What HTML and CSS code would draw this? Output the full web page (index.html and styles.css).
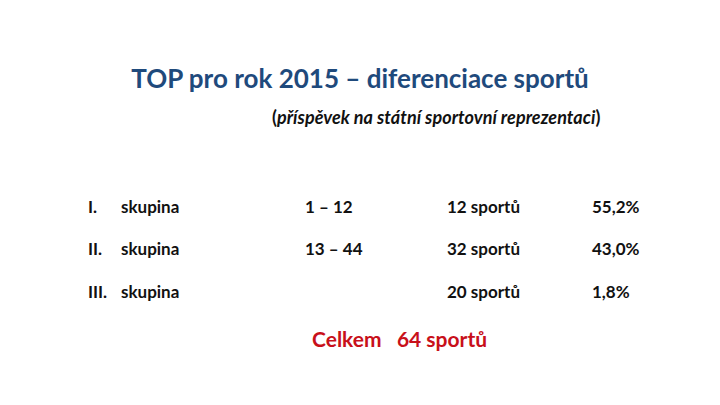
FILE: index.html
```html
<!DOCTYPE html>
<html lang="cs">
<head>
    <meta charset="UTF-8">
    <title>TOP pro rok 2015</title>
    <link rel="stylesheet" href="styles.css">
</head>
<body>
    <div class="slide">
        <h1 class="title">TOP pro rok 2015 – diferenciace sportů</h1>
        <p class="subtitle">(<em>příspěvek na státní sportovní reprezentaci</em>)</p>

        <div class="groups">
            <span>I.</span><span>skupina</span><span>1 – 12</span><span>12 sportů</span><span>55,2%</span>
            <span>II.</span><span>skupina</span><span>13 – 44</span><span>32 sportů</span><span>43,0%</span>
            <span>III.</span><span>skupina</span><span></span><span>20 sportů</span><span>1,8%</span>
        </div>

        <p class="total">Celkem&nbsp;&nbsp; 64 sportů</p>
    </div>
</body>
</html>
```

FILE: styles.css
```css
body {
    margin: 0;
    background-color: #fff;
    font-family: Lato, "Open Sans", sans-serif;
}

.slide {
    width: 720px;
    height: 405px;
    padding-top: 62px;
    box-sizing: border-box;
}

.title {
    margin: 0;
    text-align: center;
    font-size: 26px;
    font-weight: bold;
    color: #1f4a7c;
}

.subtitle {
    margin: 12px 0 0;
    padding-left: 272px;
    font-size: 18px;
    font-weight: bold;
    color: #111;
}

.subtitle em {
    font-style: italic;
    letter-spacing: 0.05px;
}

.groups {
    display: grid;
    grid-template-columns: 33px 184px 142px 145px auto;
    grid-auto-rows: 42.5px;
    align-items: center;
    margin: 57px 0 0 88px;
    font-size: 17px;
    font-weight: bold;
    color: #111;
}

.total {
    margin: 13px 0 0 312px;
    font-size: 21px;
    font-weight: bold;
    color: #c8101a;
}
```
